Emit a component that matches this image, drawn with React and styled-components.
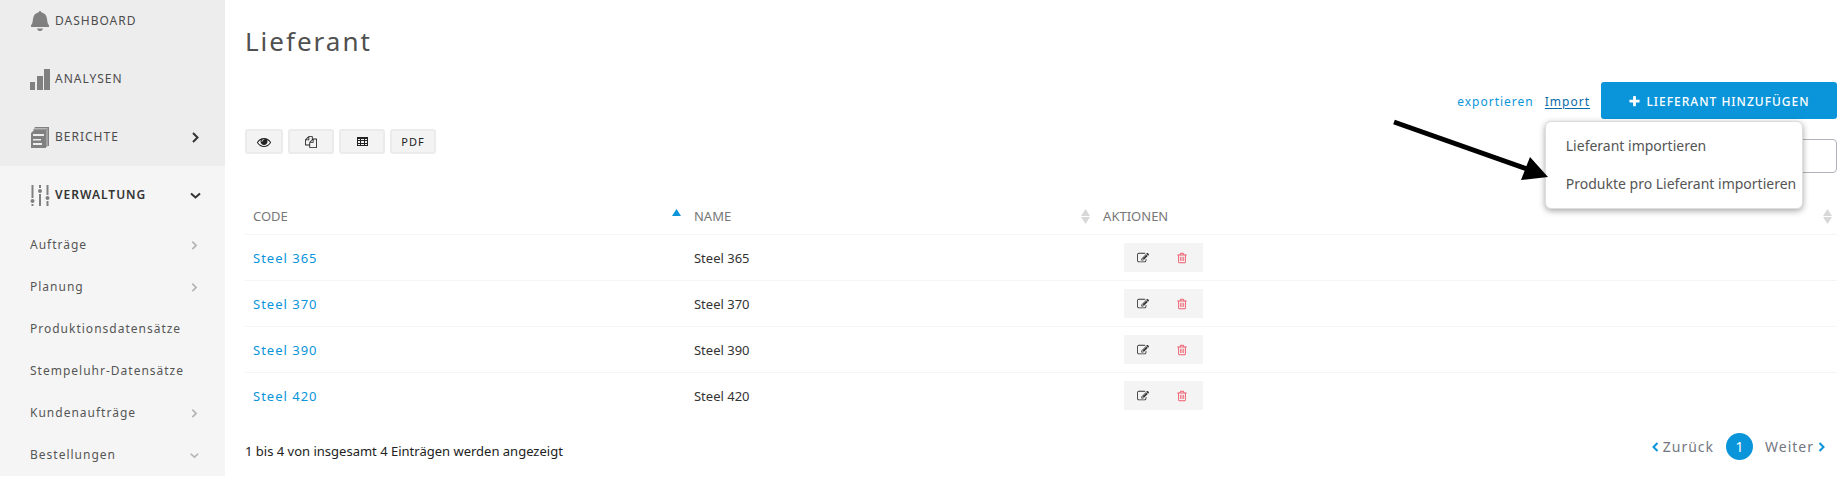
import React from "react";
import styled, { createGlobalStyle, css } from "styled-components";

const GlobalStyle = createGlobalStyle`
  * { box-sizing: border-box; }
  body {
    margin: 0;
    background: #fff;
    color: #333;
    font-family: "Noto Sans", "Open Sans", sans-serif;
    font-size: 12px;
    line-height: 20px;
  }
  button, input { font: inherit; color: inherit; }
  a { color: #0a95da; text-decoration: none; }
`;

const Page = styled.div`
  display: grid;
  grid-template-columns: 225px minmax(0, 1fr);
  align-items: start;
  overflow-x: hidden;
`;

/* ---------- sidebar ---------- */

const Sidebar = styled.nav`
  background: #ededed;
  overflow: hidden;
`;

const MenuList = styled.ul`
  list-style: none;
  margin: -8px 0 0;
  padding: 0;
`;

const MenuLink = styled.a`
  display: flex;
  align-items: center;
  gap: 5px;
  height: 58px;
  padding: 0 24px 0 30px;
  letter-spacing: 1px;
  text-transform: uppercase;
  color: ${(p) => (p.$active ? "#333" : "#4c4c4c")};
  font-weight: ${(p) => (p.$active ? 600 : 400)};
`;

const MenuIcon = styled.svg`
  width: 20px;
  height: 22px;
  fill: #808080;
`;

const MenuLabel = styled.span`
  flex: 1;
  white-space: nowrap;
`;

const Caret = styled.svg`
  width: ${(p) => (p.$muted ? 10 : 12)}px;
  height: ${(p) => (p.$muted ? 10 : 12)}px;
  fill: none;
  stroke: ${(p) => (p.$muted ? "#b4b4b4" : "#333")};
  stroke-width: 2;
`;

const OpenSection = styled.li`
  background: #f5f5f5;
`;

const SubList = styled.ul`
  list-style: none;
  margin: 0;
  padding: 0;
`;

const SubLink = styled.a`
  display: flex;
  align-items: center;
  height: 42px;
  padding: 0 26px 0 30px;
  letter-spacing: 1px;
  color: #555;
`;

/* ---------- content ---------- */

const Content = styled.main`
  padding: 0 5px 0 20px;
`;

const Title = styled.h1`
  margin: 0;
  font-size: 26px;
  line-height: 82px;
  font-weight: 400;
  letter-spacing: 2px;
  color: #505050;
`;

const ActionBar = styled.div`
  display: flex;
  justify-content: flex-end;
  align-items: center;
  gap: 11px;
`;

const ActionLink = styled.a`
  padding-top: 2px;
  letter-spacing: 1px;
  ${(p) =>
    p.$active &&
    css`
      color: #0a6aa8;
      text-decoration: underline;
      text-underline-offset: 2px;
    `}
`;

const ImportMenu = styled.div`
  position: relative;
  padding-top: 2px;
`;

const Dropdown = styled.ul`
  position: absolute;
  z-index: 2;
  top: 31px;
  left: 0;
  width: 258px;
  list-style: none;
  margin: 0;
  padding: 5px 0;
  background: #fff;
  border: 1px solid #ddd;
  border-radius: 6px;
  box-shadow: 0 2px 6px rgba(0, 0, 0, 0.35);
`;

const DropdownLink = styled.a`
  display: block;
  padding: 0 0 0 20px;
  font-size: 14px;
  line-height: 38px;
  white-space: nowrap;
  color: #555;
`;

const Pointer = styled.svg`
  position: absolute;
  z-index: 3;
  top: 29px;
  right: calc(100% - 4px);
  width: 156px;
  height: 64px;
`;

const PrimaryButton = styled.button`
  display: flex;
  align-items: center;
  justify-content: center;
  gap: 5px;
  width: 236px;
  height: 37px;
  padding: 2px 0 0;
  border: 0;
  border-radius: 3px;
  background: #0a95da;
  color: #fff;
  letter-spacing: 1px;
  font-weight: 500;
  text-transform: uppercase;
`;

const ToolRow = styled.div`
  display: flex;
  justify-content: space-between;
  align-items: flex-start;
  margin-top: 10px;
`;

const ToolGroup = styled.div`
  display: flex;
  gap: 5px;
`;

const ToolButton = styled.button`
  display: flex;
  align-items: center;
  justify-content: center;
  width: ${(p) => (p.$compact ? 38 : 46)}px;
  height: 25px;
  padding: 0;
  border: 2px solid #ebebeb;
  border-radius: 3px;
  background: #f3f3f3;
  color: #222;
  font-size: 11px;
  letter-spacing: 1px;
`;

const SearchBox = styled.input`
  width: 240px;
  height: 34px;
  margin-top: 10px;
  padding: 0 10px;
  border: 1px solid #b3b3bb;
  border-radius: 4px;
  background: #fff;
`;

const Glyph = styled.svg`
  width: ${(p) => p.$size}px;
  height: ${(p) => p.$size}px;
  fill: currentColor;
`;

const Table = styled.table`
  width: 100%;
  margin-top: 23px;
  border-collapse: separate;
  border-spacing: 0;
  table-layout: fixed;
  font-size: 13px;
`;

const Col = styled.col`
  width: ${(p) => p.$width};
`;

const HeadCell = styled.th`
  height: 39px;
  padding: 2px 5px 0 8px;
  border-bottom: 1px solid #f5f5f5;
  text-align: left;
  font-weight: 400;
  color: #777;
`;

const HeadInner = styled.div`
  display: flex;
  justify-content: space-between;
  align-items: center;
`;

const SortMark = styled.svg`
  width: 9px;
  height: 15px;
  fill: ${(p) => (p.$active ? "#0a95da" : "#d8d8d8")};
`;

const Cell = styled.td`
  height: 46px;
  padding: 0 8px;
  border-bottom: 1px solid #f5f5f5;
  tr:last-child > & { border-bottom-color: transparent; }
`;

const CodeLink = styled.a`
  letter-spacing: 1px;
`;

const RowActions = styled.div`
  display: flex;
  width: 79px;
  height: 29px;
  margin-left: 21px;
  padding-right: 2px;
  background: #f4f4f4;
`;

const RowButton = styled.button`
  flex: 1;
  display: flex;
  align-items: center;
  justify-content: center;
  padding: 0;
  border: 0;
  background: none;
  color: ${(p) => (p.$danger ? "#ee5a6c" : "#333")};
`;

const Footer = styled.footer`
  display: flex;
  justify-content: space-between;
  align-items: flex-start;
  margin-top: 14px;
`;

const Info = styled.p`
  margin: 0;
  font-size: 13px;
  line-height: 36px;
  color: #222;
`;

const Pager = styled.nav`
  display: flex;
  align-items: center;
  gap: 12px;
  padding-right: 12px;
  font-size: 14px;
`;

const PagerLink = styled.a`
  display: flex;
  align-items: center;
  gap: 4px;
  letter-spacing: 1px;
  color: #74777f;
`;

const PagerCaret = styled.svg`
  width: 7px;
  height: 10px;
  fill: none;
  stroke: #0a95da;
  stroke-width: 2;
`;

const PageNumber = styled.a`
  width: 27px;
  line-height: 27px;
  border-radius: 50%;
  background: #0a95da;
  color: #fff;
  text-align: center;
`;

/* ---------- icons ---------- */

const PATHS = {
  eye: "M1664 960q-152-236-381-353 61 104 61 225 0 185-131.5 316.5t-316.5 131.5-316.5-131.5-131.5-316.5q0-121 61-225-229 117-381 353 133 205 333.5 326.5t434.5 121.5 434.5-121.5 333.5-326.5zm-720-384q0-20-14-34t-34-14q-125 0-214.5 89.5t-89.5 214.5q0 20 14 34t34 14 34-14 14-34q0-86 61-147t147-61q20 0 34-14t14-34zm848 384q0 34-20 69-140 230-376.5 368.5t-499.5 138.5-499.5-139-376.5-368q-20-35-20-69t20-69q140-229 376.5-368t499.5-139 499.5 139 376.5 368q20 35 20 69z",
  copy: "M1696 384q40 0 68 28t28 68v1216q0 40-28 68t-68 28h-960q-40 0-68-28t-28-68v-288h-544q-40 0-68-28t-28-68v-672q0-40 20-88t48-76l408-408q28-28 76-48t88-20h416q40 0 68 28t28 68v328q68-40 128-40h416zm-544 213l-299 299h299v-299zm-640-384l-299 299h299v-299zm196 647l316-316v-416h-384v416q0 40-28 68t-68 28h-416v640h512v-256q0-40 20-88t48-76zm956 804v-1152h-384v416q0 40-28 68t-68 28h-416v640h896z",
  trash: "M704 736v576q0 14-9 23t-23 9h-64q-14 0-23-9t-9-23v-576q0-14 9-23t23-9h64q14 0 23 9t9 23zm256 0v576q0 14-9 23t-23 9h-64q-14 0-23-9t-9-23v-576q0-14 9-23t23-9h64q14 0 23 9t9 23zm256 0v576q0 14-9 23t-23 9h-64q-14 0-23-9t-9-23v-576q0-14 9-23t23-9h64q14 0 23 9t9 23zm128 724v-948h-896v948q0 22 7 40.5t14.5 27 10.5 8.5h832q3 0 10.5-8.5t14.5-27 7-40.5zm-672-1076h448l-48-117q-7-9-17-11h-317q-10 2-17 11zm928 32v64q0 14-9 23t-23 9h-96v948q0 83-47 143.5t-113 60.5h-832q-66 0-113-58.5t-47-141.5v-952h-96q-14 0-23-9t-9-23v-64q0-14 9-23t23-9h309l70-167q15-37 54-63t79-26h320q40 0 79 26t54 63l70 167h309q14 0 23 9t9 23z",
  edit: "M888 1184l116-116-152-152-116 116v56h96v96h56zm440-720q-16-16-33 1l-350 350q-17 17-1 33t33-1l350-350q17-17 1-33zm80 594v190q0 119-84.5 203.5t-203.5 84.5h-832q-119 0-203.5-84.5t-84.5-203.5v-832q0-119 84.5-203.5t203.5-84.5h832q63 0 117 25 15 7 18 23 3 17-9 29l-49 49q-14 14-32 8-23-6-45-6h-832q-66 0-113 47t-47 113v832q0 66 47 113t113 47h832q66 0 113-47t47-113v-126q0-13 9-22l64-64q15-15 35-7t20 29zm-96-738l288 288-672 672h-288v-288zm444 132l-92 92-288-288 92-92q28-28 68-28t68 28l152 152q28 28 28 68t-28 68z",
  plus: "M1600 736v192q0 40-28 68t-68 28h-416v416q0 40-28 68t-68 28h-192q-40 0-68-28t-28-68v-416h-416q-40 0-68-28t-28-68v-192q0-40 28-68t68-28h416v-416q0-40 28-68t68-28h192q40 0 68 28t28 68v416h416q40 0 68 28t28 68z",
};

function Icon({ name, size }) {
  return (
    <Glyph $size={size} viewBox="0 0 1792 1792" aria-hidden="true">
      <path d={PATHS[name]} />
    </Glyph>
  );
}

function TableIcon() {
  return (
    <Glyph $size={11} viewBox="0 0 11 11" aria-hidden="true">
      <path
        fillRule="evenodd"
        d="M0 1h11v9H0zM1 3v1h2V3zM4 3v1h3V3zM8 3v1h2V3zM1 5v2h2V5zM4 5v2h3V5zM8 5v2h2V5zM1 8v1h2V8zM4 8v1h3V8zM8 8v1h2V8z"
      />
    </Glyph>
  );
}

const BellIcon = () => (
  <MenuIcon viewBox="0 0 20 22" aria-hidden="true">
    <path d="M10 1q1 0 1.300 1.200Q16.500 3.500 17 9q.2 4.500 2 6.500v1.500H1v-1.500Q2.800 13.500 3 9q.5-5.500 5.700-6.800Q9 1 10 1z" />
    <path d="M7 18.500h6Q12.500 21 10 21t-3-2.500z" />
  </MenuIcon>
);

const BarsIcon = () => (
  <MenuIcon viewBox="0 0 20 22" aria-hidden="true">
    <path d="M0 14h5v8H0zM7 8h6v14H7zM14 1h6v21h-6z" />
  </MenuIcon>
);

const ReportIcon = () => (
  <MenuIcon viewBox="0 0 20 22" aria-hidden="true">
    <path
      fillRule="evenodd"
      d="M4 4h12v18H1V7zM3 8v2h11V8zM3 13v1.500h8V13zM3 17v2h9v-2z"
    />
    <path d="M5 1h14v19h-1.500V2.500H4zM3.500 3h13.700v18H16.300V3.700H3z" />
  </MenuIcon>
);

const SlidersIcon = () => (
  <MenuIcon viewBox="0 0 20 22" aria-hidden="true">
    <path d="M1.500 1h2v13h-2zM1.500 20h2v2h-2zM9 1h2v3H9zM9 10h2v12H9zM16.500 1h2v10h-2zM16.500 17h2v5h-2z" />
    <circle cx="2.500" cy="17" r="2" />
    <circle cx="10" cy="7" r="2" />
    <circle cx="17.500" cy="14" r="2" />
  </MenuIcon>
);

function Chevron({ open, muted }) {
  return (
    <Caret $muted={muted} viewBox="0 0 12 12" aria-hidden="true">
      <path d={open ? "M2 4.500l4.500 4 4.500-4" : "M4 2l4.500 4.500L4 11"} />
    </Caret>
  );
}

/* ---------- data ---------- */

const TOP_MENU = [
  { label: "Dashboard", Icon: BellIcon },
  { label: "Analysen", Icon: BarsIcon },
  { label: "Berichte", Icon: ReportIcon, nested: true },
];

const SUB_MENU = [
  { label: "Aufträge", nested: true },
  { label: "Planung", nested: true },
  { label: "Produktionsdatensätze" },
  { label: "Stempeluhr-Datensätze" },
  { label: "Kundenaufträge", nested: true },
  { label: "Bestellungen", nested: true, open: true },
];

const COLUMNS = [
  { label: "CODE", width: "27.7%", sorted: true },
  { label: "NAME", width: "25.7%" },
  { label: "AKTIONEN", width: "46.6%" },
];

const SUPPLIERS = ["Steel 365", "Steel 370", "Steel 390", "Steel 420"];

export default function App() {
  return (
    <>
      <GlobalStyle />
      <Page>
        <Sidebar aria-label="Hauptmenü">
          <MenuList>
            {TOP_MENU.map(({ label, Icon: ItemIcon, nested }) => (
              <li key={label}>
                <MenuLink href="#">
                  <ItemIcon />
                  <MenuLabel>{label}</MenuLabel>
                  {nested && <Chevron />}
                </MenuLink>
              </li>
            ))}
            <OpenSection>
              <MenuLink href="#" $active>
                <SlidersIcon />
                <MenuLabel>Verwaltung</MenuLabel>
                <Chevron open />
              </MenuLink>
              <SubList>
                {SUB_MENU.map(({ label, nested, open }) => (
                  <li key={label}>
                    <SubLink href="#">
                      <MenuLabel>{label}</MenuLabel>
                      {nested && <Chevron muted open={open} />}
                    </SubLink>
                  </li>
                ))}
              </SubList>
            </OpenSection>
          </MenuList>
        </Sidebar>

        <Content>
          <Title>Lieferant</Title>

          <ActionBar>
            <ActionLink href="#">exportieren</ActionLink>
            <ImportMenu>
              <ActionLink href="#" $active>Import</ActionLink>
              <Dropdown>
                <li><DropdownLink href="#">Lieferant importieren</DropdownLink></li>
                <li><DropdownLink href="#">Produkte pro Lieferant importieren</DropdownLink></li>
              </Dropdown>
              <Pointer viewBox="0 0 156 64" aria-hidden="true">
                <path d="M1 3L134 50" stroke="#000" strokeWidth="5" />
                <path d="M155 58L137 38L128 61z" />
              </Pointer>
            </ImportMenu>
            <PrimaryButton type="button">
              <Icon name="plus" size={13} />
              Lieferant hinzufügen
            </PrimaryButton>
          </ActionBar>

          <ToolRow>
            <ToolGroup>
              <ToolButton type="button" $compact aria-label="Spalten"><Icon name="eye" size={14} /></ToolButton>
              <ToolButton type="button" aria-label="Kopieren"><Icon name="copy" size={12} /></ToolButton>
              <ToolButton type="button" aria-label="Tabelle"><TableIcon /></ToolButton>
              <ToolButton type="button">PDF</ToolButton>
            </ToolGroup>
            <SearchBox type="search" aria-label="Suchen" />
          </ToolRow>

          <Table>
            <colgroup>
              {COLUMNS.map((c) => <Col key={c.label} $width={c.width} />)}
            </colgroup>
            <thead>
              <tr>
                {COLUMNS.map(({ label, sorted }) => (
                  <HeadCell key={label} scope="col">
                    <HeadInner>
                      {label}
                      <SortMark $active={sorted} viewBox="0 0 9 15" aria-hidden="true">
                        <path d="M0 7L4.500 0L9 7z" />
                        {!sorted && <path d="M0 8L4.500 15L9 8z" />}
                      </SortMark>
                    </HeadInner>
                  </HeadCell>
                ))}
              </tr>
            </thead>
            <tbody>
              {SUPPLIERS.map((name) => (
                <tr key={name}>
                  <Cell><CodeLink href="#">{name}</CodeLink></Cell>
                  <Cell>{name}</Cell>
                  <Cell>
                    <RowActions>
                      <RowButton type="button" aria-label="Bearbeiten"><Icon name="edit" size={12} /></RowButton>
                      <RowButton type="button" $danger aria-label="Löschen"><Icon name="trash" size={12} /></RowButton>
                    </RowActions>
                  </Cell>
                </tr>
              ))}
            </tbody>
          </Table>

          <Footer>
            <Info>1 bis 4 von insgesamt 4 Einträgen werden angezeigt</Info>
            <Pager aria-label="Seiten">
              <PagerLink href="#">
                <PagerCaret viewBox="0 0 7 10" aria-hidden="true"><path d="M5.500 1L1.500 5l4 4" /></PagerCaret>
                Zurück
              </PagerLink>
              <PageNumber href="#" aria-current="page">1</PageNumber>
              <PagerLink href="#">
                Weiter
                <PagerCaret viewBox="0 0 7 10" aria-hidden="true"><path d="M1.500 1l4 4-4 4" /></PagerCaret>
              </PagerLink>
            </Pager>
          </Footer>
        </Content>
      </Page>
    </>
  );
}
